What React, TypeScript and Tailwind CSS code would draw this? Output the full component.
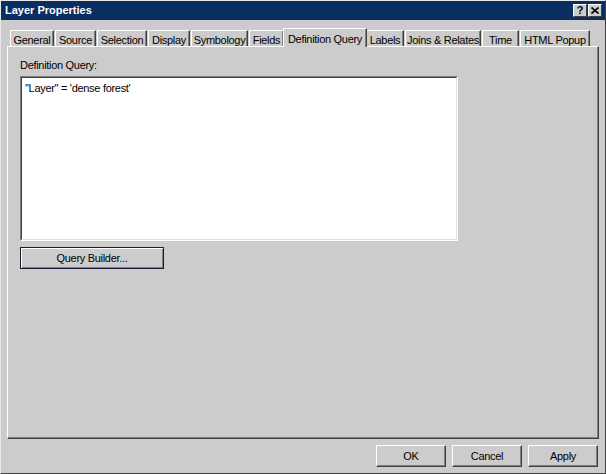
const tabs: { label: string; w: number }[] = [
  { label: 'General', w: 44 },
  { label: 'Source', w: 41 },
  { label: 'Selection', w: 50 },
  { label: 'Display', w: 42 },
  { label: 'Symbology', w: 57 },
  { label: 'Fields', w: 35 },
  { label: 'Definition Query', w: 80 },
  { label: 'Labels', w: 38 },
  { label: 'Joins & Relates', w: 76 },
  { label: 'Time', w: 37 },
  { label: 'HTML Popup', w: 70 },
];

function Tab({ label, w, active }: { label: string; w: number; active?: boolean }) {
  if (active) {
    return (
      <div
        className="relative z-10 -mx-[2px] -mb-[1px] flex h-[19px] shrink-0 items-start justify-center whitespace-nowrap border-l border-t border-r border-l-white border-t-white border-r-[#404040] bg-[#cccccc] pt-[2px] shadow-[inset_-1px_0_0_#808080]"
        style={{ width: w + 4 }}
      >
        {label}
      </div>
    );
  }
  return (
    <div
      className="flex h-[16px] shrink-0 items-start justify-center whitespace-nowrap border-l border-t border-r border-l-white border-t-white border-r-[#404040] pt-[1px] shadow-[inset_-1px_0_0_#808080]"
      style={{ width: w }}
    >
      {label}
    </div>
  );
}

function Btn({ children, w, def }: { children: React.ReactNode; w: number; def?: boolean }) {
  return (
    <div
      className={
        'flex h-[22px] items-center justify-center bg-[#cccccc] ' +
        (def
          ? 'border border-[#1a1a3a] shadow-[inset_1px_1px_0_#ffffff,inset_-1px_-1px_0_#808080]'
          : 'border border-l-white border-t-white border-r-[#404040] border-b-[#404040] shadow-[inset_-1px_-1px_0_#808080]')
      }
      style={{ width: w }}
    >
      {children}
    </div>
  );
}

export default function App() {
  return (
    <div
      className="flex h-[474px] w-[606px] flex-col border border-l-[#e8e8e8] border-t-[#e8e8e8] border-r-[#404040] border-b-[#404040] bg-[#cccccc] text-[11px] tracking-[-0.3px] text-black"
      style={{ fontFamily: '"Liberation Sans", Arial, sans-serif' }}
    >
      <div className="flex h-[19px] items-center justify-between bg-[#0b2e62] pl-[4px] pr-[3px]">
        <span className="text-[11px] font-bold tracking-normal text-white">Layer Properties</span>
        <div className="flex gap-[1px]">
          <div className="flex h-[13px] w-[14px] items-center justify-center border border-l-white border-t-white border-r-[#404040] border-b-[#404040] bg-[#cccccc] text-[11px] font-bold leading-none">
            ?
          </div>
          <div className="flex h-[13px] w-[14px] items-center justify-center border border-l-white border-t-white border-r-[#404040] border-b-[#404040] bg-[#cccccc]">
            <svg width="8" height="7" viewBox="0 0 8 7">
              <path d="M0.5 0.5 L7.5 6.5 M7.5 0.5 L0.5 6.5" stroke="#000" strokeWidth="1.6" />
            </svg>
          </div>
        </div>
      </div>

      <div className="flex items-end gap-[1px] pl-[9px] pt-[8px]">
        {tabs.map((t) => (
          <Tab key={t.label} label={t.label} w={t.w} active={t.label === 'Definition Query'} />
        ))}
      </div>

      <div className="mx-[6px] flex h-[393px] flex-col border border-l-white border-t-white border-r-[#404040] border-b-[#404040] px-[12px] pt-[10px] shadow-[inset_-1px_-1px_0_#808080]">
        <div className="h-[19px]">Definition Query:</div>
        <div className="h-[165px] w-[438px] border border-l-[#808080] border-t-[#808080] border-r-white border-b-white">
          <div className="h-full w-full border border-l-[#404040] border-t-[#404040] border-r-[#e0e0e0] border-b-[#e0e0e0] bg-white px-[3px] pt-[2px]">
            "Layer" = 'dense forest'
          </div>
        </div>
        <div className="mt-[6px]">
          <Btn w={144} def>
            Query Builder...
          </Btn>
        </div>
      </div>

      <div className="flex justify-end gap-[6px] pr-[7px] pt-[6px]">
        <Btn w={70}>OK</Btn>
        <Btn w={70}>Cancel</Btn>
        <Btn w={70}>Apply</Btn>
      </div>
    </div>
  );
}
